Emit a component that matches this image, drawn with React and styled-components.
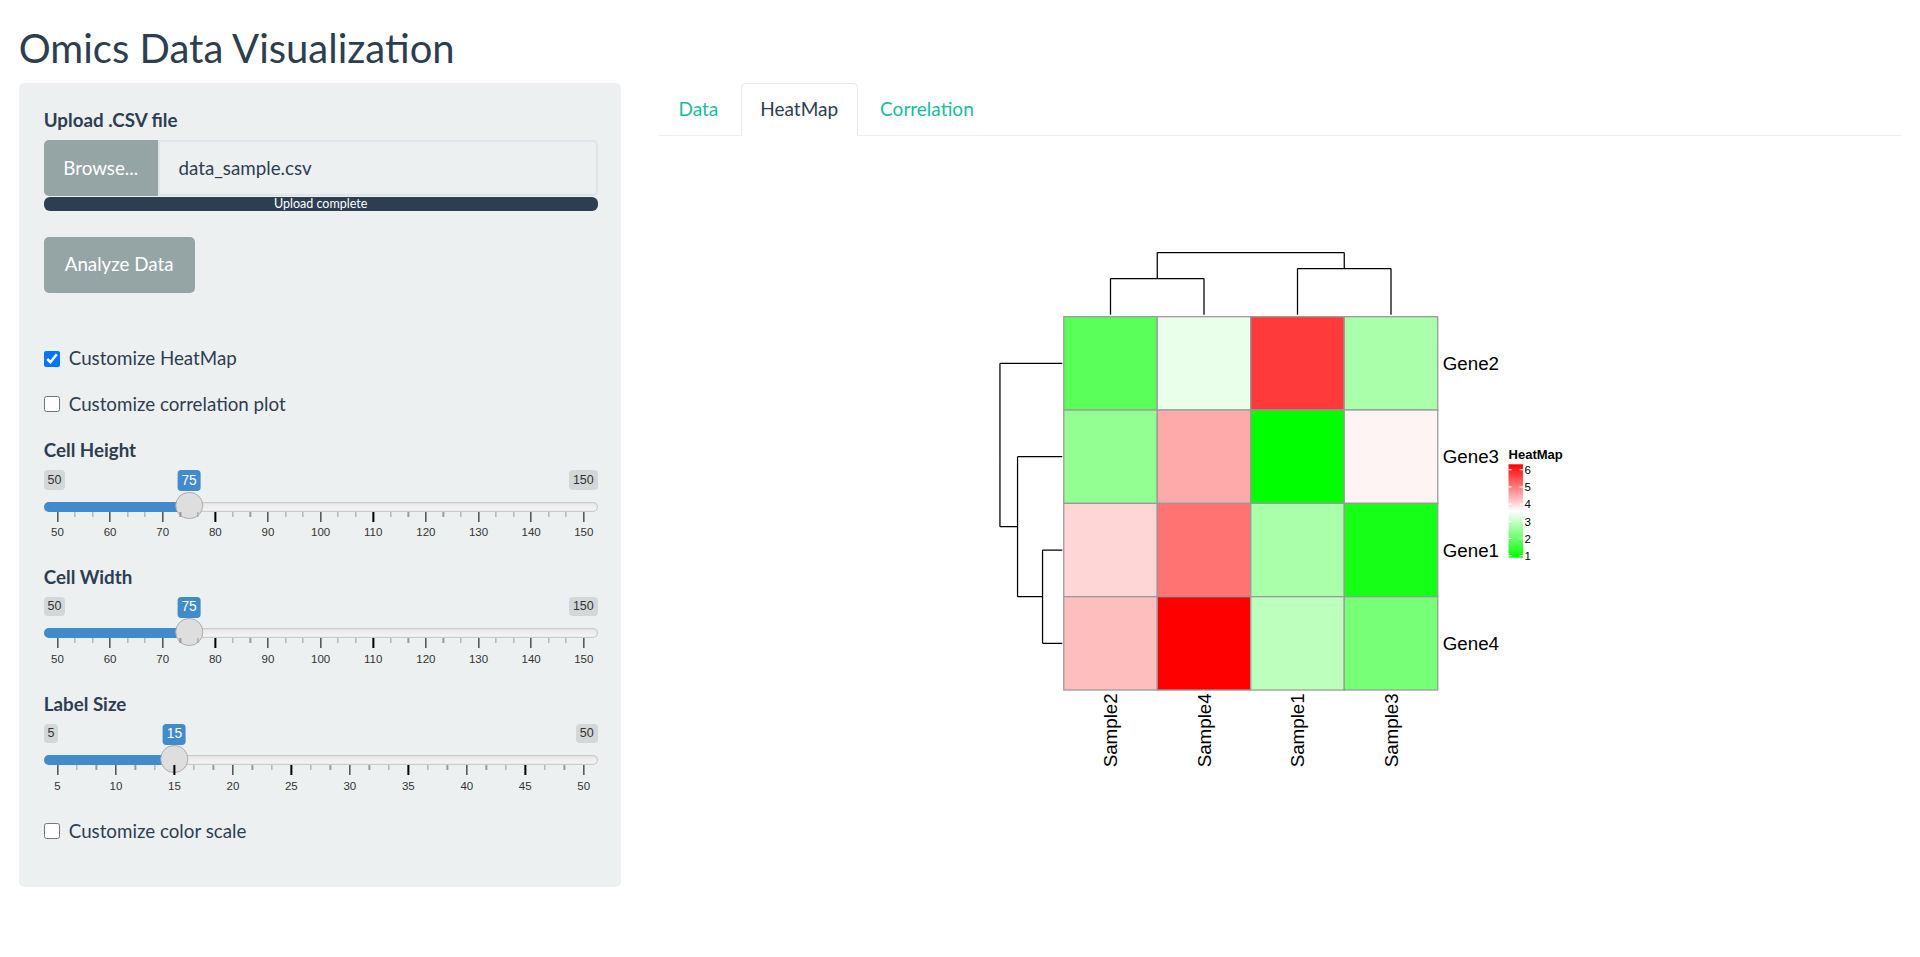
import React from "react";
import styled, { createGlobalStyle } from "styled-components";

const GlobalStyle = createGlobalStyle`
  *, *::before, *::after { box-sizing: border-box; }
  html, body { margin: 0; padding: 0; background: #ffffff; }
  body {
    font-family: Lato, "Helvetica Neue", "Liberation Sans", Arial, sans-serif;
    font-size: 18.75px;
    line-height: 26.79px;
    color: #2c3e50;
  }
`;

const Page = styled.div`
  padding: 0 18.75px;
`;

const Title = styled.h2`
  margin: 26.25px 0 13.125px;
  font-size: 40px;
  font-weight: 400;
  line-height: 44px;
  color: #2c3e50;
`;

const Layout = styled.div`
  display: grid;
  grid-template-columns: 602.5px 1fr;
  column-gap: 37.5px;
  align-items: start;
`;

const Sidebar = styled.aside`
  background: #ecf0f1;
  border-radius: 5px;
  padding: 23.75px 23.75px 23.75px 25px;
`;

const FieldLabel = styled.div`
  font-weight: 700;
  margin-bottom: 6.25px;
  margin-top: ${(p) => p.$mt || 0}px;
`;

const InputGroup = styled.div`
  display: flex;
  height: 56.25px;
`;

const BrowseButton = styled.span`
  display: flex;
  align-items: center;
  justify-content: center;
  width: 114px;
  flex: none;
  background: #95a5a6;
  color: #ffffff;
  border-radius: 5px 0 0 5px;
`;

const FileName = styled.div`
  flex: 1;
  display: flex;
  align-items: center;
  padding: 0 18.75px;
  border: 2px solid #dce4ec;
  border-radius: 0 5px 5px 0;
  background: #ecf0f1;
`;

const Progress = styled.div`
  margin-top: 1px;
  height: 14px;
  background: #2c3e50;
  border-radius: 6px;
  color: #ffffff;
  font-size: 12.5px;
  line-height: 14px;
  text-align: center;
`;

const ActionButton = styled.button`
  display: block;
  margin-top: 25.25px;
  height: 56.25px;
  padding: 0 21px;
  border: none;
  border-radius: 5px;
  background: #95a5a6;
  color: #ffffff;
  font: inherit;
`;

const CheckRow = styled.label`
  display: flex;
  align-items: flex-start;
  margin-top: ${(p) => p.$mt}px;
`;

const CheckBox = styled.input.attrs({ type: "checkbox" })`
  flex: none;
  width: 16px;
  height: 16px;
  margin: 5.5px 9px 0 0;
`;

/* ---------- slider ---------- */

const SliderBox = styled.div`
  position: relative;
  height: 75px;
  font-family: "Liberation Sans", Arial, sans-serif;
`;

const EdgeLabels = styled.div`
  display: flex;
  justify-content: space-between;
  align-items: flex-start;
  height: 31.25px;
`;

const EdgeTag = styled.span`
  padding: 1.25px 3.75px;
  font-size: 12.5px;
  line-height: 16.7px;
  color: #333333;
  background: rgba(0, 0, 0, 0.1);
  border-radius: 3.75px;
`;

const ValueTag = styled.span`
  position: absolute;
  top: 0;
  transform: translateX(-50%);
  padding: 1.25px 3.75px;
  font-size: 13.75px;
  line-height: 18.3px;
  color: #ffffff;
  background: #428bca;
  border-radius: 3.75px;
  white-space: nowrap;
`;

const Track = styled.div`
  position: relative;
  height: 10px;
  border-radius: 16px;
  background: linear-gradient(to bottom, #dedede -50%, #ffffff 150%);
  box-shadow: inset 0 0 0 1.25px #cccccc;
`;

const TrackFill = styled.div`
  position: absolute;
  left: 0;
  top: 0;
  height: 100%;
  background: #428bca;
  border-radius: 10px 0 0 10px;
`;

const Handle = styled.div`
  position: absolute;
  top: -10px;
  width: 27.5px;
  height: 27.5px;
  transform: translateX(-50%);
  border-radius: 50%;
  background: #dedede;
  border: 1.25px solid #ababab;
`;

const Scale = styled.div`
  position: relative;
  height: 33.75px;
`;

const Tick = styled.span`
  position: absolute;
  top: 0;
  width: 1.25px;
  height: ${(p) => (p.$major ? 10 : 5)}px;
  background: ${(p) => (p.$major ? "#000000" : "#9a9a9a")};
  transform: translateX(-50%);
`;

const ScaleLabel = styled.span`
  position: absolute;
  top: 14.5px;
  transform: translateX(-50%);
  font-size: 11.5px;
  line-height: 13px;
  color: #333333;
  white-space: nowrap;
`;

function RangeSlider({ min, max, value, step }) {
  const frac = (v) => (v - min) / (max - min);
  const pos = (v) => `calc(13.75px + ${frac(v)} * (100% - 27.5px))`;
  const majors = [];
  for (let v = min; v <= max + 1e-9; v += step) majors.push(v);
  const minors = [];
  for (let i = 0; i < majors.length - 1; i++) {
    minors.push(majors[i] + step / 3, majors[i] + (2 * step) / 3);
  }
  return (
    <SliderBox>
      <EdgeLabels>
        <EdgeTag>{min}</EdgeTag>
        <EdgeTag>{max}</EdgeTag>
      </EdgeLabels>
      <ValueTag style={{ left: pos(value) }}>{value}</ValueTag>
      <Track>
        <TrackFill style={{ width: pos(value) }} />
        <Handle style={{ left: pos(value) }} />
      </Track>
      <Scale>
        {minors.map((v, i) => (
          <Tick key={"m" + i} style={{ left: pos(v) }} />
        ))}
        {majors.map((v) => (
          <Tick key={"M" + v} $major style={{ left: pos(v) }} />
        ))}
        {majors.map((v) => (
          <ScaleLabel key={"L" + v} style={{ left: pos(v) }}>
            {v}
          </ScaleLabel>
        ))}
      </Scale>
    </SliderBox>
  );
}

/* ---------- main panel ---------- */

const Main = styled.main`
  min-width: 0;
`;

const TabBar = styled.nav`
  display: flex;
  border-bottom: 1px solid #ecf0f1;
`;

const Tab = styled.span`
  height: 52.5px;
  margin: 0 2.5px -1px 0;
  padding: 0 18.75px;
  font-size: 19px;
  line-height: 50.5px;
  border: 1px solid ${(p) => (p.$active ? "#e6e9ea" : "transparent")};
  border-bottom-color: ${(p) => (p.$active ? "#ffffff" : "transparent")};
  border-radius: 5px 5px 0 0;
  background: ${(p) => (p.$active ? "#ffffff" : "transparent")};
  color: ${(p) => (p.$active ? "#2c3e50" : "#18bc9c")};
`;

const TabPane = styled.section`
  background: #ffffff;
`;

const PlotSvg = styled.svg`
  display: block;
  font-family: "Liberation Sans", Arial, Helvetica, sans-serif;
`;

const cols = ["Sample2", "Sample4", "Sample1", "Sample3"];
const rows = ["Gene2", "Gene3", "Gene1", "Gene4"];
const colors = [
  ["#5aff5a", "#e9ffe9", "#ff3a3a", "#aaffaa"],
  ["#93ff93", "#ffaaaa", "#00ff00", "#fff4f4"],
  ["#ffd6d6", "#ff7373", "#aaffaa", "#16ff16"],
  ["#ffbebe", "#ff0000", "#bdffbd", "#77ff77"],
];

const X0 = 1063.5;
const CW = 93.5;
const Y0 = 316.7;
const CH = 93.33;

function Heatmap() {
  const cx = (j) => X0 + CW * j + CW / 2;
  const cy = (i) => Y0 + CH * i + CH / 2;
  const colDendro = [
    "M1157,252.5 H1344",
    "M1157,252.5 V278.5",
    "M1110.25,278.5 H1203.75",
    "M1110.25,278.5 V314.7",
    "M1203.75,278.5 V314.7",
    "M1344,252.5 V268.5",
    "M1297.25,268.5 H1390.75",
    "M1297.25,268.5 V314.7",
    "M1390.75,268.5 V314.7",
  ].join(" ");
  const r = [cy(0), cy(1), cy(2), cy(3)];
  const n2 = (r[2] + r[3]) / 2;
  const n1 = (r[1] + n2) / 2;
  const rowDendro = [
    `M999.7,${r[0]} H1062`,
    `M999.7,${r[0]} V${n1}`,
    `M999.7,${n1} H1017.3`,
    `M1017.3,${r[1]} V${n2}`,
    `M1017.3,${r[1]} H1062`,
    `M1017.3,${n2} H1042.3`,
    `M1042.3,${r[2]} V${r[3]}`,
    `M1042.3,${r[2]} H1062`,
    `M1042.3,${r[3]} H1062`,
  ].join(" ");

  const legendTop = 469.7;
  const legendStep = 17.2;
  const legendVals = [6, 5, 4, 3, 2, 1];

  return (
    <PlotSvg width="1242.5" height="680" viewBox="658.75 136 1242.5 680">
      <defs>
        <linearGradient id="hmScale" x1="0" y1="0" x2="0" y2="1">
          <stop offset="0" stopColor="#ff0000" />
          <stop offset="0.5" stopColor="#ffffff" />
          <stop offset="1" stopColor="#00ff00" />
        </linearGradient>
      </defs>
      <path d={colDendro} stroke="#000" strokeWidth="1.25" fill="none" />
      <path d={rowDendro} stroke="#000" strokeWidth="1.25" fill="none" />
      {colors.map((row, i) =>
        row.map((c, j) => (
          <rect
            key={i + "-" + j}
            x={X0 + CW * j}
            y={Y0 + CH * i}
            width={CW}
            height={CH}
            fill={c}
            stroke="#999999"
            strokeWidth="1.25"
          />
        ))
      )}
      {rows.map((g, i) => (
        <text key={g} x={1442.5} y={cy(i) + 6.6} fontSize="18.75" fill="#000">
          {g}
        </text>
      ))}
      {cols.map((s, j) => (
        <text
          key={s}
          transform={`translate(${cx(j) + 6.8},693.3) rotate(-90)`}
          textAnchor="end"
          fontSize="18.75"
          fill="#000"
        >
          {s}
        </text>
      ))}
      <text x="1508.3" y="459.3" fontSize="13" fontWeight="700" fill="#000">
        HeatMap
      </text>
      <rect x="1508.3" y="464.3" width="14.4" height="93.4" fill="url(#hmScale)" />
      {legendVals.map((v, k) => {
        const y = legendTop + legendStep * k;
        return (
          <g key={v}>
            <line x1="1508.3" x2="1511.6" y1={y} y2={y} stroke="#fff" strokeWidth="1.2" />
            <line x1="1519.4" x2="1522.7" y1={y} y2={y} stroke="#fff" strokeWidth="1.2" />
            <text x="1524.3" y={y + 4.2} fontSize="11.5" fill="#000">
              {v}
            </text>
          </g>
        );
      })}
    </PlotSvg>
  );
}

export default function App() {
  return (
    <>
      <GlobalStyle />
      <Page>
        <Title>Omics Data Visualization</Title>
        <Layout>
          <Sidebar>
            <FieldLabel>Upload .CSV file</FieldLabel>
            <InputGroup>
              <BrowseButton>Browse...</BrowseButton>
              <FileName>data_sample.csv</FileName>
            </InputGroup>
            <Progress>Upload complete</Progress>
            <ActionButton type="button">Analyze Data</ActionButton>

            <CheckRow $mt={52.5}>
              <CheckBox defaultChecked />
              <span>Customize HeatMap</span>
            </CheckRow>
            <CheckRow $mt={18.75}>
              <CheckBox />
              <span>Customize correlation plot</span>
            </CheckRow>

            <FieldLabel $mt={19.5}>Cell Height</FieldLabel>
            <RangeSlider min={50} max={150} value={75} step={10} />

            <FieldLabel $mt={18.75}>Cell Width</FieldLabel>
            <RangeSlider min={50} max={150} value={75} step={10} />

            <FieldLabel $mt={18.75}>Label Size</FieldLabel>
            <RangeSlider min={5} max={50} value={15} step={5} />

            <CheckRow $mt={18.75}>
              <CheckBox />
              <span>Customize color scale</span>
            </CheckRow>
            <div style={{ height: 18.75 }} />
          </Sidebar>
          <Main>
            <TabBar>
              <Tab>Data</Tab>
              <Tab $active>HeatMap</Tab>
              <Tab>Correlation</Tab>
            </TabBar>
            <TabPane>
              <Heatmap />
            </TabPane>
          </Main>
        </Layout>
      </Page>
    </>
  );
}
